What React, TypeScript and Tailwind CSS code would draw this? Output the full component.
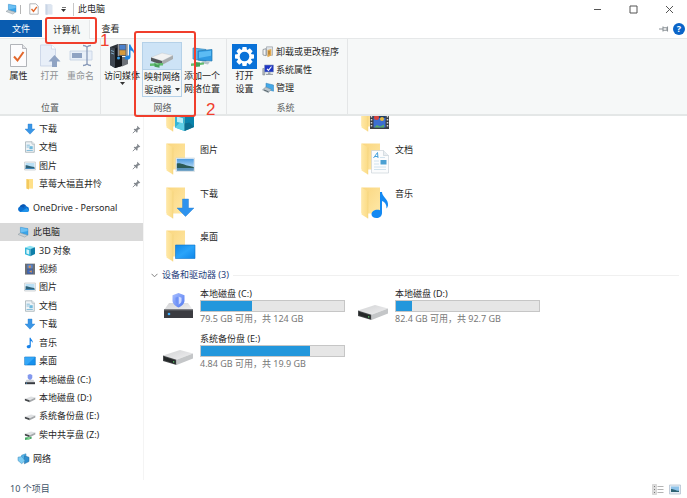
import type { ReactNode } from "react";

/* ---------- small icons (navigation pane, 12px box) ---------- */

const DownArrow = () => (
  <svg width="12" height="12" viewBox="0 0 12 12" aria-hidden="true">
    <path d="M4 1h4v5h3L6 11.2 1 6h3z" fill="#3a96e6" stroke="#2b80d2" strokeWidth=".4" />
  </svg>
);

const DocIcon = () => (
  <svg width="12" height="12" viewBox="0 0 12 12" aria-hidden="true">
    <path d="M1.5.8h6.6l2.2 2.2v8.3H1.5z" fill="#eef3f6" stroke="#9aa7ae" strokeWidth=".7" />
    <path d="M8 .8v2.3h2.3" fill="#fff" stroke="#9aa7ae" strokeWidth=".6" />
    <path d="M2.6 4.2h3.2M2.6 6h2.2M2.6 9.5h6.2" stroke="#7bb8d8" strokeWidth=".9" />
    <path d="M5.4 5.2h3.3v3H5.4z" fill="#6fb9dd" />
  </svg>
);

const PictureIcon = () => (
  <svg width="12" height="12" viewBox="0 0 12 12" aria-hidden="true">
    <path d="M.6 2h10.8v8H.6z" fill="#f4f6f7" stroke="#b5bcc0" strokeWidth=".6" />
    <path d="M1.6 3h8.8v6H1.6z" fill="#b9dff5" />
    <path d="M1.6 5.2c2.5-.2 4 1 8.8 1.9V9H1.6z" fill="#2f6277" />
    <path d="M1.6 8h8.8v1H1.6z" fill="#3f86b8" />
  </svg>
);

const SmallFolder = () => (
  <svg width="12" height="12" viewBox="0 0 12 12" aria-hidden="true">
    <path d="M2.5 1h6.5v9.6H2.5z" fill="#ffe089" />
    <path d="M2.5 1 5 2v9.6l-2.5-1z" fill="#f3c95f" />
  </svg>
);

const CloudIcon = () => (
  <svg width="13" height="12" viewBox="0 0 13 12" aria-hidden="true">
    <path d="M3.3 9.9A2.9 2.9 0 0 1 2.8 4.4 3.9 3.9 0 0 1 9.7 4.6 2.7 2.7 0 0 1 10 9.9z" fill="#0b6fd0" />
    <path d="M3.4 9.9 9.6 6l2.6 2.2c0 1-.9 1.7-2.2 1.7z" fill="#1f93ea" />
    <path d="M2.8 4.4A3.9 3.9 0 0 1 8.5 3L6.6 5.7z" fill="#0a57b3" />
  </svg>
);

const PcIcon = () => (
  <svg width="13" height="12" viewBox="0 0 13 12" aria-hidden="true">
    <path d="M3.4 1.2 11 2.6v6.6L3.4 7.2z" fill="#3aa4e8" stroke="#3a8cc6" strokeWidth=".4" />
    <path d="M3.8 1.7 10.6 3v2L3.8 6.6z" fill="#6cc0f3" />
    <path d="M1 8.4 3.4 7l7 2.2-2.6 1.9z" fill="#c9d2d8" stroke="#8b989f" strokeWidth=".5" />
  </svg>
);

const CubeIcon = () => (
  <svg width="12" height="12" viewBox="0 0 12 12" aria-hidden="true">
    <path d="M1 2.4 6 .8l5 1.4-4.4 1.7z" fill="#8fe3f2" />
    <path d="M1 2.4l5.4 1.5v7.4L1 9.3z" fill="#33b6da" />
    <path d="M6.4 3.9 11 2.2v6.9l-4.6 2.2z" fill="#0f7fa9" />
    <path d="M2.4 4.3 5.2 5v4.6l-2.8-1z" fill="#d4f5fa" />
  </svg>
);

const FilmIcon = () => (
  <svg width="12" height="12" viewBox="0 0 12 12" aria-hidden="true">
    <path d="M1 .7h10v10.8H1z" fill="#54575c" />
    <path d="M2 1.5v9.5M10 1.5v9.5" stroke="#c5c8cb" strokeWidth=".9" strokeDasharray="1 1" />
    <path d="M3.2 1.4h5.6v4.2H3.2z" fill="#5b86cc" />
    <path d="M3.2 6.3h5.6v4.4H3.2z" fill="#4169b8" />
    <path d="M4.3 3.5 6.2 2l1 2.2-1.8 1zM5 8.6l2.6-1.3.4 2.5z" fill="#d9924f" />
  </svg>
);

const NoteIcon = () => (
  <svg width="12" height="12" viewBox="0 0 12 12" aria-hidden="true">
    <path d="M5.6.7h1.1c.2 1.8 2.6 2.5 2.1 5.4-.4-1.3-1.1-1.8-2-2v5.3c0 1.1-1 1.9-2.2 1.9-1.1 0-1.9-.6-1.9-1.5 0-1.1 1.3-2 2.9-1.7z" fill="#1681e8" />
  </svg>
);

const DesktopIcon = () => (
  <svg width="12" height="12" viewBox="0 0 12 12" aria-hidden="true">
    <path d="M.7 2h10.6v8H.7z" fill="#1791ee" stroke="#0c6ebd" strokeWidth=".6" />
    <path d="M1 2.3h10L3 9.7H1z" fill="#35a7f7" />
  </svg>
);

const SystemDriveIcon = () => (
  <svg width="12" height="12" viewBox="0 0 12 12" aria-hidden="true">
    <path d="M6 0l2.3.9v2.3C8.3 4.8 7.2 5.6 6 6 4.8 5.6 3.7 4.8 3.7 3.2V.9z" fill="#8298ee" />
    <path d="M2.6 5.8h6.8L11 8.4H1z" fill="#cfd2d6" />
    <path d="M1 8.2h10v2H1z" fill="#373a40" />
    <path d="M2 8.8h1v.8H2z" fill="#4ab3ff" />
  </svg>
);

const DriveIcon = () => (
  <svg width="12" height="12" viewBox="0 0 12 12" aria-hidden="true">
    <path d="M.9 6.8 7 4.6l4.3 1-5.6 2.6z" fill="#dfe1e3" />
    <path d="M.9 6.8l4.8 1.4v2L.9 8.6z" fill="#44474a" />
    <path d="M5.7 8.2l5.6-2.6v1.8l-5.6 2.8z" fill="#a5a8ab" />
  </svg>
);

const SharedDriveIcon = () => (
  <svg width="12" height="12" viewBox="0 0 12 12" aria-hidden="true">
    <path d="M.9 4.8 7 2.6l4.3 1-5.6 2.6z" fill="#dfe1e3" />
    <path d="M.9 4.8l4.8 1.4v2L.9 6.6z" fill="#44474a" />
    <path d="M5.7 6.2l5.6-2.6v1.8L5.7 8.2z" fill="#a5a8ab" />
    <path d="M1 8.6l6.6-.9v2L1 11z" fill="#45a764" />
    <path d="M3.5 8.2l2.4-.5v2.6l-2.4.6z" fill="#7fd08f" />
  </svg>
);

const NetworkIcon = () => (
  <svg width="13" height="12" viewBox="0 0 13 12" aria-hidden="true">
    <path d="M4.6 2.2 9 .8v7.4l-4.4-1z" fill="#55b6ea" stroke="#2b7fb4" strokeWidth=".5" />
    <path d="M7.4 2.7 12 4.3v4.2l-4.6 2.3z" fill="#2f8fd0" stroke="#23699b" strokeWidth=".5" />
    <path d="M1 4.2l4-.6 3 4.2-3.3 2.9L1 7.6z" fill="#7cccf3" stroke="#3a87b8" strokeWidth=".5" />
  </svg>
);

const PinIcon = () => (
  <svg width="9" height="9" viewBox="0 0 9 9" aria-hidden="true">
    <path d="M5.3.7l3 3-.7.5-.6-.1-1.5 1.5.1 1.500-.7.6L1.700 4.500l.6-.7 1.500.1 1.500-1.500-.2-.8z" fill="#84898f" />
    <path d="M3.200 5.800.8 8.200" stroke="#84898f" strokeWidth=".9" />
  </svg>
);

/* ---------- large icons ---------- */

const Gradients = () => (
  <svg width="0" height="0" className="absolute" aria-hidden="true">
    <defs>
      <linearGradient id="folderBack" x1="0" y1="0" x2="1" y2="1">
        <stop offset="0" stopColor="#fad67f" />
        <stop offset="1" stopColor="#ffe8a6" />
      </linearGradient>
      <linearGradient id="folderFront" x1="0" y1="0" x2="1" y2="0">
        <stop offset="0" stopColor="#ffe8a6" />
        <stop offset="1" stopColor="#fbdb86" />
      </linearGradient>
      <linearGradient id="driveTop" x1="0" y1="0" x2="1" y2="1">
        <stop offset="0" stopColor="#d2d3d5" />
        <stop offset="1" stopColor="#efeff0" />
      </linearGradient>
      <linearGradient id="shield" x1="0" y1="0" x2="1" y2="1">
        <stop offset="0" stopColor="#a9bfff" />
        <stop offset="1" stopColor="#4f78f0" />
      </linearGradient>
      <linearGradient id="sky" x1="0" y1="0" x2="0" y2="1">
        <stop offset="0" stopColor="#4e9be0" />
        <stop offset="1" stopColor="#d8eefb" />
      </linearGradient>
      <linearGradient id="screen" x1="0" y1="0" x2="1" y2="1">
        <stop offset="0" stopColor="#1287e6" />
        <stop offset=".5" stopColor="#2aa4fa" />
        <stop offset="1" stopColor="#0f86e8" />
      </linearGradient>
    </defs>
  </svg>
);

const Folder = ({ children }: { children: ReactNode }) => (
  <svg width="30" height="32" viewBox="0 0 30 32" className="shrink-0" aria-hidden="true">
    <path d="M.5.5H19v26H7L.5 26z" fill="url(#folderBack)" />
    <path d="M.5.5 7 4.500V31.500L.5 27.500z" fill="url(#folderFront)" />
    <path d="M7 4.500v27" stroke="#f0cb70" strokeWidth=".4" />
    {children}
  </svg>
);

const CubeGlyph = () => (
  <>
    <path d="M9 14 18 10l10 3.500-8 3.500z" fill="#9be8f3" />
    <path d="M9 14l9.500 3v14L9 27.500z" fill="#35b5d6" />
    <path d="M18.500 17 28 13.500v13.500l-9.500 4z" fill="#0a83ab" />
    <path d="M9 27.500l5-5 4.500 1v7.500z" fill="#5fd0e6" />
    <path d="M18.500 23.500l5-1 4.500 4.500-9.500 4z" fill="#0c6e90" />
    <path d="M11 16.500l6 1.800v5L11 22z" fill="#b9eff7" />
  </>
);

const FilmGlyph = () => (
  <>
    <path d="M9 9h19v20H9z" fill="#3b3d42" />
    <path d="M10.500 10v18M26.500 10v18" stroke="#d5d7d9" strokeWidth="1.500" strokeDasharray="1.500 1.500" />
    <path d="M12.500 10h12v17.500h-12z" fill="#3c6fd1" />
    <path d="M12.500 10h12v8h-12z" fill="#243f63" />
    <circle cx="15.500" cy="17.500" r="2.500" fill="#d9433c" />
    <circle cx="21" cy="19" r="2" fill="#e6b93e" />
    <path d="M13 27.500l3-2.500 3 1.500 4-2v3z" fill="#5aa868" />
  </>
);

const PictureGlyph = () => (
  <>
    <path d="M10 15h18.500v13.500H10z" fill="#fff" stroke="#c8d4dc" strokeWidth=".6" />
    <path d="M10.800 15.800h17v12h-17z" fill="url(#sky)" />
    <path d="M10.800 20.500c5-.8 7 2 17 3.500v1.500h-17z" fill="#2d5a55" />
    <path d="M10.800 25h17v2.800h-17z" fill="#5b93bb" />
  </>
);

const DocGlyph = () => (
  <>
    <path d="M10.500 7.500h12l5 5V30h-17z" fill="#fbfcfd" stroke="#c4cdd4" strokeWidth=".6" />
    <path d="M22.500 7.500v5h5" fill="#e8edf1" stroke="#c4cdd4" strokeWidth=".6" />
    <path d="M12.500 15l4-5.500.5 5.500M14 13.500h3" stroke="#48a3dc" strokeWidth="1" fill="none" />
    <path d="M19 14.500h5M13 18h5M13 21h5M13 24h12M13 26.500h12" stroke="#c6dcea" strokeWidth=".8" />
    <path d="M19.500 17h6v4.500h-6z" fill="#4ba0d3" />
  </>
);

const DownGlyph = () => (
  <path d="M16.500 12h6v9h5.500l-8.500 8.500L11 21h5.500z" fill="#2e93ee" stroke="#1f7ad0" strokeWidth=".4" />
);

const NoteGlyph = () => (
  <path d="M19 5h2c0 5 6.800 7 6 13.500-.4 1.500-1 2.500-1.500 3 .3-4-1.500-6.500-4.500-7.500v12c0 3-2.500 5-5.500 5s-5-1.500-5-3.800c0-3 4-5.200 8.500-4z" fill="#1489f2" />
);

const DesktopGlyph = () => (
  <path d="M9.500 15h19.500v13.500H9.500z" fill="url(#screen)" stroke="#0b73c9" strokeWidth=".6" />
);

const SystemDriveLarge = () => (
  <svg width="32" height="32" viewBox="0 0 32 32" aria-hidden="true">
    <path d="M7 15h19l5 7H2z" fill="url(#driveTop)" />
    <path d="M2 21.500h29V30H2z" fill="#3b3c41" />
    <path d="M2 21.500h29v1H2z" fill="#65676c" />
    <circle cx="7" cy="26" r="1.300" fill="#3faeff" />
    <path d="M16.500 5l6 2.300v5.200c0 3.500-2.800 5.500-6 7-3.200-1.500-6-3.500-6-7V7.300z" fill="url(#shield)" />
    <path d="M16.500 8.500l3 1.300v3c0 1.800-1.300 2.800-3 3.700z" fill="#cdd9ff" />
    <path d="M16.500 8.500l-3 1.300v3c0 1.800 1.300 2.800 3 3.700z" fill="#6f92f7" />
  </svg>
);

const DriveLarge = () => (
  <svg width="32" height="32" viewBox="0 0 32 32" aria-hidden="true">
    <path d="M1 22.500 18 17l13 3.500-16.500 6.200z" fill="url(#driveTop)" />
    <path d="M1 22.500l13.500 4.200V32L1 28z" fill="#46494b" />
    <path d="M2 23.800l11.500 3.600v3.600L2 27.300z" fill="#242728" />
    <path d="M14.500 26.700 31 20.500v5L14.500 32z" fill="#c4c6c8" />
    <path d="M11 28.200h1.300v1.300H11z" fill="#5cd36a" />
  </svg>
);

/* ---------- ribbon icons ---------- */

const PropertiesIcon = () => (
  <svg width="20" height="26" viewBox="0 0 20 26" aria-hidden="true">
    <path d="M1.500 1.500h12l4 4v18h-16z" fill="#fcfcfd" stroke="#a8abb1" strokeWidth=".9" />
    <path d="M13.500 1.500v4h4" fill="#e3e5e8" stroke="#a8abb1" strokeWidth=".8" />
    <path d="M5 13.500l3.500 4L14.500 9" stroke="#e2672b" strokeWidth="2" fill="none" />
  </svg>
);

const OpenIcon = () => (
  <svg width="22" height="26" viewBox="0 0 22 26" aria-hidden="true">
    <path d="M1.500 2h11l4 4v17h-15z" fill="#e8eff8" stroke="#c9d5e6" strokeWidth=".9" />
    <path d="M12.500 2v4h4" fill="#fff" stroke="#c9d5e6" strokeWidth=".8" />
    <path d="M15.500 12l6 6.500h-3.500V24h-5v-5.500H9.500z" fill="#8fa3c3" />
  </svg>
);

const RenameIcon = () => (
  <svg width="24" height="26" viewBox="0 0 24 26" aria-hidden="true">
    <path d="M1 8h22v9H1z" fill="#e8eff8" stroke="#c4d0e2" strokeWidth=".8" />
    <path d="M3 10h10v5H3z" fill="#8fa3c3" />
    <path d="M14 2.500c2 0 3 .5 4 1.500 1-1 2-1.500 4-1.500M18 4v17M14 22.500c2 0 3-.5 4-1.500 1 1 2 1.500 4 1.500" fill="none" stroke="#8799b8" strokeWidth="1.300" />
  </svg>
);

const MediaIcon = () => (
  <svg width="26" height="26" viewBox="0 0 26 26" aria-hidden="true">
    <path d="M1 4l8-3 4 1v21l-7 2-5-3z" fill="#2b3036" />
    <path d="M1 4l5 1.500V25l-5-3z" fill="#3f4852" />
    <path d="M6 5.500 13 3v20l-7 2z" fill="#14181c" />
    <path d="M2 7.500l3 1M2 10l3 1" stroke="#8fc0df" strokeWidth=".8" />
    <circle cx="9.500" cy="15" r="1.500" fill="#3c9be0" />
    <path d="M8.500 1h10v12h-10z" fill="#5a5f68" />
    <path d="M10.500 2h6v4.500h-6z" fill="#4a80cc" />
    <path d="M10.500 7.300h6V12h-6z" fill="#d69a3d" />
    <path d="M9.500 1.500v11M17.500 1.500v11" stroke="#e4e5e6" strokeWidth=".8" strokeDasharray="1 1" />
    <path d="M13 14h6v7l-6 2.500z" fill="#6d7278" />
    <path d="M20 1.500h1.500c.3 3 4.300 4.500 3.300 9-.6-1.800-1.800-2.800-3.300-3.200v6.500c0 1.800-1.500 3-3.300 3-1.500 0-2.500-.8-2.500-2 0-1.700 2-2.800 4.300-2.300z" fill="#1e83e2" />
  </svg>
);

const MapDriveIcon = () => (
  <svg width="26" height="26" viewBox="0 0 26 26" aria-hidden="true">
    <path d="M2 14.500 13 10l11 2.500L13 18z" fill="#f2f2f2" stroke="#bfc2c4" strokeWidth=".4" />
    <path d="M2 14.500 13 18v4L2 18z" fill="#55585b" />
    <path d="M13 18l11-5.500V16L13 22z" fill="#a9acae" />
    <path d="M1 20.500l13-.5v2.500L1 23z" fill="#61bd6d" />
    <path d="M5.500 19.500l5 1.200v4l-5-1z" fill="#45a057" />
    <path d="M6.500 20.500l3 .7" stroke="#b6ecb8" strokeWidth=".8" />
  </svg>
);

const AddLocationIcon = () => (
  <svg width="26" height="26" viewBox="0 0 26 26" aria-hidden="true">
    <path d="M4 5l13 1.500v12L4 16z" fill="#5db8ee" stroke="#2f82b8" strokeWidth=".7" />
    <path d="M9 8l14-1.500v11.500L9 17z" fill="#2f9ae3" stroke="#2478b0" strokeWidth=".7" />
    <path d="M10 9l12-1.300v5L10 15z" fill="#5cbcf4" />
    <path d="M14 18l7 .500-2 3-7-1.500z" fill="#b5c2ca" />
    <path d="M2 20.500l13-1v2L2 23z" fill="#61bd6d" />
    <path d="M6 19l5 .5v4l-5 .5z" fill="#45a057" />
  </svg>
);

const GearIcon = () => (
  <svg width="25" height="26" viewBox="0 0 25 26" aria-hidden="true">
    <path d="M0 1h25v25H0z" fill="#0a72d8" />
    <g transform="translate(12.500 13.500)" fill="#fff">
      {[0, 45, 90, 135, 180, 225, 270, 315].map((angle) => (
        <path key={angle} d="M-2-9.500h4l.6 4h-5.200z" transform={`rotate(${angle})`} />
      ))}
      <circle r="7.200" />
      <circle r="4.800" fill="#0a72d8" />
    </g>
  </svg>
);

const UninstallIcon = () => (
  <svg width="12" height="12" viewBox="0 0 12 12" aria-hidden="true">
    <path d="M4.500.8h6v8.500h-6z" fill="#dfe4e8" stroke="#8c949a" strokeWidth=".6" />
    <path d="M1 3.500l3-.8v7L1 9z" fill="#f2f3f4" stroke="#7c8388" strokeWidth=".7" />
    <path d="M5.500 4l3.800-1v6.500l-3.800 1.700z" fill="#e3a84d" />
    <path d="M7 5v3.500" stroke="#8b5e1a" strokeWidth=".8" />
  </svg>
);

const SystemIcon = () => (
  <svg width="12" height="12" viewBox="0 0 12 12" aria-hidden="true">
    <path d="M.8 4.500h2v6.500h-2z" fill="#b4bac0" stroke="#737a80" strokeWidth=".5" />
    <path d="M2.500 1h9v7h-9z" fill="#2037c4" stroke="#8a9ab8" strokeWidth=".6" />
    <path d="M5 4.800l1.500 1.600L9.500 2.500" fill="none" stroke="#fff" strokeWidth="1.100" />
    <path d="M6 8.200h2.500v1.600H11v1.200H4V9.800h2z" fill="#9ca4ab" />
  </svg>
);

const ManageIcon = () => (
  <svg width="12" height="12" viewBox="0 0 12 12" aria-hidden="true">
    <path d="M4 1.200 11.500 3v6.200L4 7z" fill="#44a8e8" stroke="#2a7fb7" strokeWidth=".5" />
    <path d="M.5 7.800 3.800 5l5.500 2.400-3 3.200z" fill="#b8c3ca" stroke="#77848c" strokeWidth=".5" />
    <path d="M2 8l4.500 1.800" stroke="#4c5960" strokeWidth=".9" />
  </svg>
);

const Caret = () => (
  <svg width="5" height="3" viewBox="0 0 5 3" className="inline-block shrink-0" aria-hidden="true">
    <path d="M0 0h5L2.500 3z" fill="#333" />
  </svg>
);

/* ---------- data ---------- */

type NavItem = { label: string; icon: ReactNode; pinned?: boolean; root?: boolean; selected?: boolean };

const quickAccess: NavItem[] = [
  { label: "下载", icon: <DownArrow />, pinned: true },
  { label: "文档", icon: <DocIcon />, pinned: true },
  { label: "图片", icon: <PictureIcon />, pinned: true },
  { label: "草莓大福直井怜", icon: <SmallFolder />, pinned: true },
];

const thisPc: NavItem[] = [
  { label: "此电脑", icon: <PcIcon />, root: true, selected: true },
  { label: "3D 对象", icon: <CubeIcon /> },
  { label: "视频", icon: <FilmIcon /> },
  { label: "图片", icon: <PictureIcon /> },
  { label: "文档", icon: <DocIcon /> },
  { label: "下载", icon: <DownArrow /> },
  { label: "音乐", icon: <NoteIcon /> },
  { label: "桌面", icon: <DesktopIcon /> },
  { label: "本地磁盘 (C:)", icon: <SystemDriveIcon /> },
  { label: "本地磁盘 (D:)", icon: <DriveIcon /> },
  { label: "系统备份盘 (E:)", icon: <DriveIcon /> },
  { label: "柴中共享盘 (Z:)", icon: <SharedDriveIcon /> },
];

/* the first row is scrolled under the ribbon, so its names are out of view */
const folders = [
  { label: "", name: "3D 对象", glyph: <CubeGlyph /> },
  { label: "", name: "视频", glyph: <FilmGlyph /> },
  { label: "图片", name: "图片", glyph: <PictureGlyph /> },
  { label: "文档", name: "文档", glyph: <DocGlyph /> },
  { label: "下载", name: "下载", glyph: <DownGlyph /> },
  { label: "音乐", name: "音乐", glyph: <NoteGlyph /> },
  { label: "桌面", name: "桌面", glyph: <DesktopGlyph /> },
];

const drives = [
  { label: "本地磁盘 (C:)", detail: "79.5 GB 可用，共 124 GB", used: 36, icon: <SystemDriveLarge /> },
  { label: "本地磁盘 (D:)", detail: "82.4 GB 可用，共 92.7 GB", used: 11, icon: <DriveLarge /> },
  { label: "系统备份盘 (E:)", detail: "4.84 GB 可用，共 19.9 GB", used: 76, icon: <DriveLarge /> },
];

/* ---------- pieces ---------- */

function NavRow({ label, icon, pinned, root, selected }: NavItem) {
  return (
    <li className={`flex items-center ${selected ? "bg-[#d9d9d9]" : ""}`}>
      <a href="#" className={`flex flex-1 items-center gap-[3px] whitespace-nowrap ${root ? "pl-[17px]" : "pl-6"}`}>
        {icon}
        {label}
      </a>
      {pinned && <span className="pr-[2px]"><PinIcon /></span>}
    </li>
  );
}

function BigButton({ icon, children, width, disabled }: { icon: ReactNode; children: ReactNode; width: string; disabled?: boolean }) {
  return (
    <button
      type="button"
      disabled={disabled}
      className={`flex flex-col items-center whitespace-nowrap pt-[4px] leading-[13px] disabled:text-[#8d9093] ${width}`}
    >
      {icon}
      {children}
    </button>
  );
}

function RibbonGroup({ title, className, children }: { title: string; className: string; children: ReactNode }) {
  return (
    <section className={`flex flex-col border-r border-[#e4e6e7] ${className}`}>
      <div className="flex flex-1">{children}</div>
      <h2 className="pr-[3px] text-center leading-[13px] text-[#5c5f61]">{title}</h2>
    </section>
  );
}

export default function App() {
  return (
    <div className="relative flex min-h-screen flex-col overflow-hidden bg-white font-['Noto_Sans','Noto_Sans_CJK_SC',sans-serif] text-[9px] leading-[12px] text-[#262626]">
      <Gradients />

      {/* title bar */}
      <header className="flex h-[18px] items-center">
        <div className="flex flex-1 items-center pl-[5px]">
          <PcIcon />
          <span className="ml-[2px] h-[9px] w-px bg-[#b5b5b5]" />
          <button type="button" aria-label="属性" className="ml-2">
            <svg width="10" height="12" viewBox="0 0 10 12" aria-hidden="true">
              <path d="M.8.8h6l2.400 2.300v8.100H.8z" fill="#fff" stroke="#a0a3a8" strokeWidth=".8" />
              <path d="M2.500 6l2 2.300L7.800 3.800" fill="none" stroke="#e2672b" strokeWidth="1.400" />
            </svg>
          </button>
          <button type="button" aria-label="新建文件夹" className="ml-[6px]">
            <svg width="8" height="12" viewBox="0 0 8 12" aria-hidden="true">
              <path d="M.5 1h5.500l1.500 1.500v9H.5z" fill="#dde5f0" />
              <path d="M.5 1 2.500 2v10l-2-.5z" fill="#c9d5e6" />
            </svg>
          </button>
          <button type="button" aria-label="自定义快速访问工具栏" className="ml-2 flex flex-col items-center gap-px">
            <span className="h-px w-[4px] bg-[#777]" />
            <Caret />
          </button>
          <span className="ml-[7px] h-[13px] w-px bg-[#c8c8c8]" />
          <h1 className="ml-1">此电脑</h1>
        </div>
        {[
          { name: "最小化", d: "M1 4.500h7" },
          { name: "最大化", d: "M1 1h7v7H1z" },
          { name: "关闭", d: "M1 1l7 7M8 1 1 8" },
        ].map((control) => (
          <button key={control.name} type="button" aria-label={control.name} className="flex w-9 items-center justify-center">
            <svg width="9" height="9" viewBox="0 0 9 9" aria-hidden="true">
              <path d={control.d} fill="none" stroke="#555" strokeWidth="1" />
            </svg>
          </button>
        ))}
      </header>

      {/* ribbon tabs */}
      <nav className="flex h-[21px] items-stretch border-b border-[#e6e8e9] pt-[2px]">
        <button type="button" className="mb-px w-[42px] bg-[#0a5cb0] text-white">文件</button>
        <button type="button" className="-mb-px ml-[3px] w-[45px] border-x border-[#e6e8e9] bg-[#f6f8f8] pr-[2px]">计算机</button>
        <button type="button" className="w-[41px]">查看</button>
        <div className="ml-auto flex items-center gap-1 pr-[2px]">
          <svg width="10" height="8" viewBox="0 0 10 8" aria-hidden="true">
            <path d="M0 4h4M4 1.500v5M4 2.800h4v2.400H4M8.500 1.500v5" fill="none" stroke="#8b9297" strokeWidth="1.100" />
          </svg>
          <button type="button" aria-label="帮助" className="h-3 w-3 rounded-full bg-[#0a64c8] font-bold text-white">?</button>
        </div>
      </nav>

      {/* ribbon */}
      <div className="flex h-[77px] border-b-2 border-[#e4e7e7] bg-[#f6f8f8]">
        <RibbonGroup title="位置" className="w-[101px] pl-[3px]">
          <BigButton icon={<PropertiesIcon />} width="w-[31px]"><span>属性</span></BigButton>
          <BigButton icon={<OpenIcon />} width="w-[31px]" disabled><span>打开</span></BigButton>
          <BigButton icon={<RenameIcon />} width="w-[31px]" disabled><span>重命名</span></BigButton>
        </RibbonGroup>

        <RibbonGroup title="网络" className="w-[126px] pl-[1px]">
          <BigButton icon={<MediaIcon />} width="w-[40px]">
            <span>访问媒体</span>
            <Caret />
          </BigButton>
          <button type="button" className="mt-[3px] flex h-[55px] w-[40px] flex-col items-stretch whitespace-nowrap border border-[#b5d1e8] leading-[13px]">
            <span className="flex justify-center border-b border-[#b5d1e8] bg-[#cde3f6]">
              <MapDriveIcon />
            </span>
            <span>映射网络</span>
            <span className="flex items-center justify-center gap-[3px]">驱动器<Caret /></span>
          </button>
          <BigButton icon={<AddLocationIcon />} width="w-[40px]">
            <span>添加一个</span>
            <span>网络位置</span>
          </BigButton>
        </RibbonGroup>

        <RibbonGroup title="系统" className="w-[121px]">
          <BigButton icon={<GearIcon />} width="w-[35px]">
            <span>打开</span>
            <span>设置</span>
          </BigButton>
          <div className="flex flex-col gap-[6px] pt-[7px]">
            <button type="button" className="flex items-center gap-[2px]"><UninstallIcon />卸载或更改程序</button>
            <button type="button" className="flex items-center gap-[2px]"><SystemIcon />系统属性</button>
            <button type="button" className="flex items-center gap-[2px]"><ManageIcon />管理</button>
          </div>
        </RibbonGroup>
      </div>

      {/* body */}
      <div className="flex flex-1">
        <aside className="flex w-[144px] shrink-0 flex-col gap-[6px] border-r border-[#f4f4f4] pt-1">
          <ul className="grid h-[73px] auto-rows-fr">
            {quickAccess.map((item) => <NavRow key={item.label} {...item} />)}
          </ul>
          <ul className="grid h-[18px]">
            <NavRow label="OneDrive - Personal" icon={<CloudIcon />} root />
          </ul>
          <ul className="grid h-[221px] auto-rows-fr">
            {thisPc.map((item) => <NavRow key={item.label} {...item} />)}
          </ul>
          <ul className="grid h-[18px]">
            <NavRow label="网络" icon={<NetworkIcon />} root />
          </ul>
        </aside>

        <main className="flex-1 overflow-hidden">
          <ul className="-mt-4 grid h-[162px] grid-cols-[195px_195px] content-between pl-[22px]">
            {folders.map((folder) => (
              <li key={folder.name}>
                <a href="#" aria-label={folder.name} className="flex gap-1">
                  <Folder>{folder.glyph}</Folder>
                  <span className="pt-px">{folder.label}</span>
                </a>
              </li>
            ))}
          </ul>

          <h2 className="mt-1 flex h-[18px] items-center gap-1 pl-[7px] pr-2 text-[#27407c]">
            <svg width="7" height="5" viewBox="0 0 7 5" aria-hidden="true">
              <path d="M.5.8l3 3 3-3" fill="none" stroke="#808080" strokeWidth="1" />
            </svg>
            设备和驱动器 (3)
            <span className="h-px flex-1 bg-[#f0f0f0]" />
          </h2>

          <ul className="mt-1 grid grid-cols-[195px_195px] gap-y-2 pl-[18px]">
            {drives.map((drive) => (
              <li key={drive.label} className="flex gap-[6px]">
                <span className="shrink-0">{drive.icon}</span>
                <div className="w-[145px]">
                  <a href="#" className="block">{drive.label}</a>
                  <div
                    role="meter"
                    aria-label={drive.label}
                    aria-valuenow={drive.used}
                    aria-valuemin={0}
                    aria-valuemax={100}
                    className="h-3 border border-[#c6c6c6] bg-[#e6e6e6]"
                  >
                    <div className="h-full bg-[#2397dc]" style={{ width: `${drive.used}%` }} />
                  </div>
                  <p className="pt-px text-[#777]">{drive.detail}</p>
                </div>
              </li>
            ))}
          </ul>
        </main>
      </div>

      {/* status bar */}
      <footer className="flex h-[18px] items-center justify-between pl-[10px] pr-[6px] text-[#3e5468]">
        <span>10 个项目</span>
        <div className="flex items-center gap-[5px]">
          <button type="button" aria-label="详细信息">
            <svg width="12" height="11" viewBox="0 0 12 11" aria-hidden="true">
              <path d="M.5.5h4v10h-4z" fill="#dcdcdc" stroke="#c8c8c8" strokeWidth=".6" />
              <path d="M2 2.500h1M2 5.500h1M2 8.500h1" stroke="#777" />
              <path d="M5.500 2.500h6M5.500 5.500h6M5.500 8.500h6" stroke="#aaa" strokeWidth=".9" />
            </svg>
          </button>
          <button type="button" aria-label="大图标">
            <svg width="12" height="11" viewBox="0 0 12 11" aria-hidden="true">
              <path d="M.5 1h11v9H.5z" fill="#e5edf4" stroke="#b5c3d0" strokeWidth=".8" />
              <path d="M2 2.500h8v5.500H2z" fill="#8ec3ea" />
              <path d="M2 5c3 0 4 1.500 8 1.800V8H2z" fill="#2e6474" />
            </svg>
          </button>
        </div>
      </footer>

      {/* step annotations laid over the window */}
      <div className="pointer-events-none absolute left-[45px] top-[17px] h-[27px] w-[52px] rounded-[3px] border-2 border-[#f03e2c]" />
      <span className="pointer-events-none absolute left-[100px] top-[31px] font-['Liberation_Sans',sans-serif] text-[17px] leading-[20px] text-[#f03e2c]">1</span>
      <div className="pointer-events-none absolute left-[134px] top-[31px] h-[86px] w-[62px] rounded-[3px] border-2 border-[#f03e2c]" />
      <span className="pointer-events-none absolute left-[206px] top-[100px] font-['Liberation_Sans',sans-serif] text-[17px] leading-[20px] text-[#f03e2c]">2</span>
    </div>
  );
}
